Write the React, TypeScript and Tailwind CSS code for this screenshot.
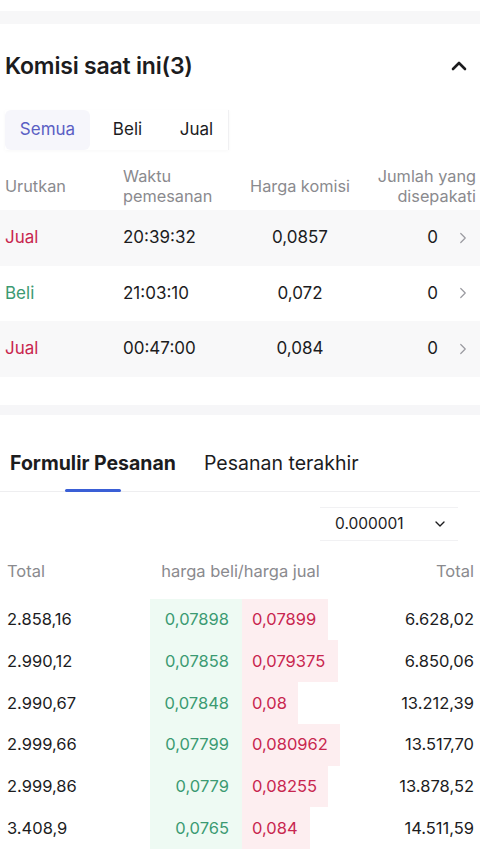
import { ChevronUp, ChevronRight, ChevronDown } from "lucide-react";

const orders = [
  { side: "Jual", time: "20:39:32", price: "0,0857", qty: "0", shade: true },
  { side: "Beli", time: "21:03:10", price: "0,072", qty: "0", shade: false },
  { side: "Jual", time: "00:47:00", price: "0,084", qty: "0", shade: true },
];

const book = [
  { left: "2.858,16", bid: "0,07898", ask: "0,07899", right: "6.628,02", askW: 86 },
  { left: "2.990,12", bid: "0,07858", ask: "0,079375", right: "6.850,06", askW: 96 },
  { left: "2.990,67", bid: "0,07848", ask: "0,08", right: "13.212,39", askW: 56 },
  { left: "2.999,66", bid: "0,07799", ask: "0,080962", right: "13.517,70", askW: 98 },
  { left: "2.999,86", bid: "0,0779", ask: "0,08255", right: "13.878,52", askW: 86 },
  { left: "3.408,9", bid: "0,0765", ask: "0,084", right: "14.511,59", askW: 68 },
];

export default function App() {
  return (
    <div className="w-[480px] h-[854px] overflow-hidden bg-white font-['Inter','Noto_Sans',sans-serif] text-[#1c1c1e]">
      {/* top band */}
      <div className="h-[11px]" />
      <div className="h-[13px] bg-[#f7f7f8]" />

      {/* ───── current commissions ───── */}
      <div className="flex items-center justify-between pl-[5px] pr-[9px] h-[84px]">
        <h2 className="text-[23px] font-semibold tracking-[-0.2px]">Komisi saat ini(3)</h2>
        <ChevronUp size={24} strokeWidth={2.6} />
      </div>

      <div className="pl-[5px] h-[46px] flex items-start pt-[2px]">
        <div className="flex items-center h-[40px] border-r border-[#f0f0f2] shadow-[0_1px_4px_rgba(0,0,0,0.03)]">
          <div className="h-full w-[85px] flex items-center justify-center bg-[#f6f6fb] rounded-[6px] text-[17px] text-[#5b5fc4]">
            Semua
          </div>
          <div className="h-full w-[75px] flex items-center justify-center text-[17px]">Beli</div>
          <div className="h-full w-[63px] flex items-center justify-center text-[17px]">Jual</div>
        </div>
      </div>

      <div className="grid grid-cols-[118px_110px_134px_1fr] pl-[5px] pr-[4px] h-[56px] pt-[8px] items-center text-[16.3px] leading-[20px] text-[#8a8a8e]">
        <div>Urutkan</div>
        <div>
          Waktu
          <br />
          pemesanan
        </div>
        <div className="text-center">Harga komisi</div>
        <div className="text-right">
          Jumlah yang
          <br />
          disepakati
        </div>
      </div>

      {orders.map((o, i) => (
        <div
          key={i}
          className={`grid grid-cols-[118px_110px_134px_1fr_42px] pl-[5px] h-[55.5px] items-center text-[17px] ${
            o.shade ? "bg-[#f8f8f9]" : "bg-white"
          }`}
        >
          <div className={o.side === "Jual" ? "text-[#c8264f]" : "text-[#3b9a72]"}>{o.side}</div>
          <div>{o.time}</div>
          <div className="text-center">{o.price}</div>
          <div className="text-right">{o.qty}</div>
          <div className="flex justify-end pr-[8px] text-[#9a9aa0]">
            <ChevronRight size={18} strokeWidth={1.6} />
          </div>
        </div>
      ))}

      <div className="h-[28px]" />
      <div className="h-[10px] bg-[#f6f6f8]" />

      {/* ───── order book ───── */}
      <div className="relative flex items-center h-[77px] border-b border-[#eeeef0] pt-[22px]">
        <div className="w-[204px] pl-[10px] text-[19.5px] font-bold">Formulir Pesanan</div>
        <div className="text-[19.5px]">Pesanan terakhir</div>
        <div className="absolute left-[65px] bottom-[-1px] w-[56px] h-[3px] rounded-full bg-[#3a5fd6]" />
      </div>

      <div className="flex justify-end pr-[22px] pt-[15px] h-[60px]">
        <div className="flex items-center w-[138px] h-[34px] border-y border-[#f1f1f3] pl-[15px] pr-[10px] justify-between text-[15.5px]">
          <span>0.000001</span>
          <ChevronDown size={16} strokeWidth={2} />
        </div>
      </div>

      <div className="grid grid-cols-[1fr_auto_1fr] pl-[7px] pr-[6px] h-[40px] items-center text-[16.5px] text-[#8a8a8e]">
        <div>Total</div>
        <div className="text-center">harga beli/harga jual</div>
        <div className="text-right">Total</div>
      </div>

      <div className="pt-[7px]">
        {book.map((r, i) => (
          <div key={i} className="flex h-[41.8px] items-center text-[16.5px]">
            <div className="w-[150px] pl-[7px]">{r.left}</div>
            <div className="w-[92px] h-full flex items-center justify-end pr-[13px] bg-[#eefaf3] text-[#3b9a72]">
              {r.bid}
            </div>
            <div className="w-[120px] h-full flex">
              <div
                className="h-full bg-[#fdeef0] flex items-center pl-[10px] text-[#c8264f]"
                style={{ width: r.askW }}
              >
                {r.ask}
              </div>
            </div>
            <div className="flex-1 text-right pr-[6px]">{r.right}</div>
          </div>
        ))}
      </div>
    </div>
  );
}
